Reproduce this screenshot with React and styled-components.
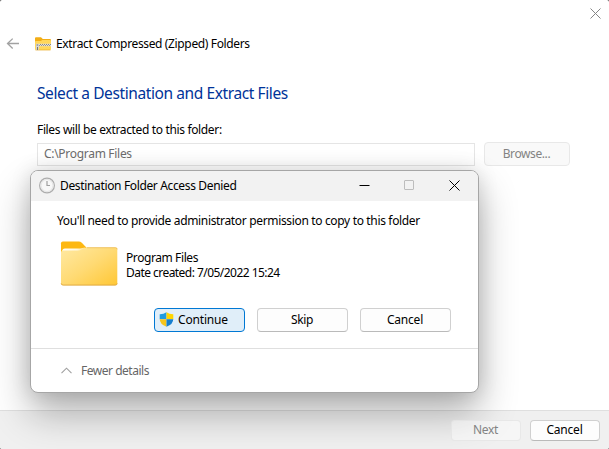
import React from 'react';
import styled, { createGlobalStyle } from 'styled-components';

const GlobalStyle = createGlobalStyle`
  * { box-sizing: border-box; }
  body {
    margin: 0;
    background: #444;
    color: #000;
    font: 12px/16px "Noto Sans", "Open Sans", sans-serif;
    overflow: hidden;
  }
`;

const Text = styled.span`
  display: block;
  white-space: nowrap;
  letter-spacing: ${(p) => p.$track ?? -0.33}px;
  color: ${(p) => p.$color ?? 'inherit'};
`;

const Wizard = styled.main`
  position: relative;
  width: 609px;
  height: 449px;
  display: flex;
  flex-direction: column;
  background: #fff;
  border-radius: 2px;
  overflow: hidden;
`;

const CaptionBar = styled.div`
  height: 32px;
  display: flex;
  justify-content: flex-end;
  padding: 8px 8px 0 0;
`;

const WizardHeader = styled.header`
  height: 24px;
  display: flex;
  align-items: center;
  padding-left: 6px;
`;

const HeaderFolder = styled.svg`
  margin: 0 5px 0 15px;
`;

const WizardBody = styled.section`
  flex: 1;
  padding: 26px 39px 0 37px;
`;

const Heading = styled.h1`
  margin: 0;
  font-size: 15.5px;
  line-height: 23px;
  font-weight: 400;
  letter-spacing: -0.4px;
  color: #003399;
  white-space: nowrap;
`;

const FieldLabel = styled.div`
  margin-top: 17px;
`;

const FieldRow = styled.div`
  display: flex;
  align-items: center;
  gap: 9px;
  margin-top: 4px;
`;

const PathField = styled.div`
  width: 438px;
  height: 23px;
  border: 1px solid #e5e5e5;
  padding: 2px 5px 2px 6px;
`;

const variants = {
  normal: 'background: #fdfdfd; border-color: #d0d0d0; border-bottom-color: #bababa; color: #000;',
  primary: 'background: #e0eef9; border-color: #0078d4; color: #000;',
  disabled: 'background: #f9f9f9; border-color: #e8e8e8; color: #838383;',
  faded: 'background: rgba(255,255,255,0.4); border-color: rgba(225,225,225,0.7); color: #838383;',
};

const Button = styled.button`
  display: flex;
  align-items: center;
  justify-content: center;
  gap: 4px;
  width: ${(p) => p.$width}px;
  height: ${(p) => p.$height ?? 24}px;
  padding: 0 1px 1px 0;
  border: 1px solid;
  border-radius: 4px;
  font: inherit;
  ${(p) => variants[p.$variant ?? 'normal']}
`;

const ElevatedButton = styled(Button)`
  justify-content: flex-start;
  padding-left: 4px;
`;

const WizardFooter = styled.footer`
  height: 39px;
  display: flex;
  justify-content: flex-end;
  gap: 9px;
  padding: 9px 9px 0 0;
  background: #f0f0f0;
  border-top: 1px solid #dfdfdf;
`;

const FooterAction = styled.div`
  position: relative;
  z-index: 2;
`;

const Dialog = styled.div`
  position: absolute;
  z-index: 1;
  left: 30px;
  top: 170px;
  width: 449px;
  height: 223px;
  display: flex;
  flex-direction: column;
  border: 1px solid #a6a6a6;
  border-radius: 8px;
  background: #fff;
  overflow: hidden;
  box-shadow: 0 20px 38px rgba(0, 0, 0, 0.3), 0 0 20px rgba(0, 0, 0, 0.13);
`;

const TitleBar = styled.div`
  flex: none;
  height: 30px;
  display: flex;
  align-items: center;
  padding: 0 18px 1px 8px;
  background: #f2f2f2;
`;

const TitleText = styled.div`
  flex: 1;
  margin-left: 5px;
  padding-top: 1px;
`;

const WindowControls = styled.div`
  display: flex;
  gap: 34px;
`;

const DialogBody = styled.div`
  flex: 1;
  padding: 12px 27px 0 26px;
`;

const ItemRow = styled.div`
  display: flex;
  align-items: center;
  gap: 7px;
  margin: 9px 0 0 1px;
  line-height: 15px;
`;

const ItemInfo = styled.div`
  padding-top: 4px;
`;

const ButtonRow = styled.div`
  display: flex;
  justify-content: flex-end;
  gap: 12px;
  margin-top: 20px;
`;

const Details = styled.div`
  flex: none;
  height: 44px;
  display: flex;
  align-items: center;
  gap: 8px;
  padding-left: 30px;
  border-top: 1px solid #dfdfdf;
`;

const CloseIcon = ({ color, width = 1 }) => (
  <svg width="11" height="11" viewBox="0 0 11 11" fill="none" stroke={color} strokeWidth={width}>
    <path d="M.5.5l10 10M10.5.5l-10 10" />
  </svg>
);

const BackIcon = () => (
  <svg width="14" height="12" viewBox="0 0 14 12" fill="none" stroke="#a2a2a2" strokeWidth="1.3">
    <path d="M13 5.5H1.5M6.7.6L1.5 5.5l5.2 5" />
  </svg>
);

const ZippedFolder = () => (
  <HeaderFolder width="16" height="14" viewBox="0 0 16 14">
    <path d="M0 1.3Q0 .3 1 .3h5l1.8 1.8H15q1 0 1 1V6H0z" fill="#f2ad16" />
    <path d="M0 5q0-1 1-1h4.8l1.5-1H15q1 0 1 1v8q0 1-1 1H1q-1 0-1-1z" fill="#ffd75b" />
    <path d="M.5 13h15" stroke="#e9ac27" strokeWidth=".7" />
    <path d="M1 8h15" stroke="#e2e0da" strokeWidth="2.4" />
    <path d="M1 7.5h15" stroke="#8a8a86" strokeWidth="1" strokeDasharray="1 1" />
    <path d="M2 8.5h14" stroke="#9a9a94" strokeWidth="1" strokeDasharray="1 1" />
    <path d="M1 7h3v3.3l-.5 3h-2L1 10.3z" fill="#d6d6d6" />
    <path d="M1.6 8h1.6M2.5 10v3" stroke="#777" />
  </HeaderFolder>
);

const Folder = () => (
  <svg width="61" height="50" viewBox="0 0 61 50">
    <defs>
      <linearGradient id="folderFront" x1="0" y1="0" x2="1" y2="1">
        <stop offset="0" stopColor="#ffe9a3" />
        <stop offset=".5" stopColor="#ffda73" />
        <stop offset="1" stopColor="#ffc734" />
      </linearGradient>
      <linearGradient id="folderGlow" x1="0" y1="0" x2="1" y2="0">
        <stop offset="0" stopColor="#fff" />
        <stop offset=".65" stopColor="#fff8e2" />
        <stop offset="1" stopColor="#ffdf87" />
      </linearGradient>
    </defs>
    <path d="M3 5.2q0-1.7 1.8-1.7h16q1.6 0 3 1.3l5 5.2L22 19H3z" fill="#fdb813" />
    <path d="M4 14q0-3.5 3-3.5h15l5-1V13H4z" fill="url(#folderGlow)" />
    <path d="M3 14.5q0-2 2-2h15q2 0 4-1.2l2-1.1q1-.7 2.5-.7h29q1.8 0 1.8 1.8v34q0 2-2 2H5q-2 0-2-2z" fill="url(#folderFront)" />
    <path d="M3.2 45.3q0 1.8 2 1.8h52q2 0 2-1.8" fill="none" stroke="#dca63f" strokeWidth=".9" />
    <path d="M29 9.7h28.5q1.7 0 1.7 1.6" fill="none" stroke="#e9b548" strokeWidth=".7" />
  </svg>
);

const Clock = () => (
  <svg width="16" height="17" viewBox="0 0 16 17" fill="none">
    <circle cx="8" cy="8.5" r="7.4" fill="#f8f8f8" stroke="#adadad" strokeWidth="1.2" />
    <circle cx="8" cy="8.5" r="6" stroke="#dedede" strokeWidth=".8" />
    <path d="M8 4v4.5h3" stroke="#a0a0a0" strokeWidth="1.2" />
  </svg>
);

const Shield = () => (
  <svg width="15" height="15" viewBox="0 0 15 15">
    <clipPath id="shieldShape">
      <path d="M7.5.3Q4.5 2.3.7 2.2V7q0 5.2 6.8 7.8 6.8-2.6 6.8-7.8V2.2Q10.5 2.3 7.5.3z" />
    </clipPath>
    <g clipPath="url(#shieldShape)">
      <path d="M0 0h7.5v7.2H0z" fill="#1d9be0" />
      <path d="M7.5 0H15v7.2H7.5z" fill="#ffd500" />
      <path d="M0 7.2h7.5V15H0z" fill="#f7c51c" />
      <path d="M7.5 7.2H15V15H7.5z" fill="#167fd0" />
    </g>
  </svg>
);

const MinimizeIcon = () => (
  <svg width="11" height="11" viewBox="0 0 11 11"><path d="M.5 5.5h10" stroke="#000" /></svg>
);

const MaximizeIcon = () => (
  <svg width="11" height="11" viewBox="0 0 11 11">
    <rect x=".5" y=".5" width="9" height="9" rx=".5" fill="none" stroke="#bdbdbd" />
  </svg>
);

const ChevronUp = () => (
  <svg width="12" height="8" viewBox="0 0 12 8" fill="none" stroke="#a0a0a0" strokeWidth="1.1">
    <path d="M.5 6.2l5-5 5 5" />
  </svg>
);

export default function App() {
  return (
    <>
      <GlobalStyle />
      <Wizard>
        <CaptionBar><CloseIcon color="#858585" /></CaptionBar>
        <WizardHeader>
          <BackIcon />
          <ZippedFolder />
          <Text $track={-0.36}>Extract Compressed (Zipped) Folders</Text>
        </WizardHeader>
        <WizardBody>
          <Heading>Select a Destination and Extract Files</Heading>
          <FieldLabel><Text $track={-0.35}>Files will be extracted to this folder:</Text></FieldLabel>
          <FieldRow>
            <PathField><Text $track={-0.3} $color="#6d6d6d">C:\Program Files</Text></PathField>
            <Button $width={86} $variant="disabled" disabled><Text $track={-0.4}>Browse...</Text></Button>
          </FieldRow>
        </WizardBody>
        <WizardFooter>
          <FooterAction><Button $width={70} $height={21} $variant="faded" disabled><Text>Next</Text></Button></FooterAction>
          <FooterAction><Button $width={70} $height={21}><Text $track={-0.2}>Cancel</Text></Button></FooterAction>
        </WizardFooter>
        <Dialog role="dialog">
          <TitleBar>
            <Clock />
            <TitleText><Text $track={-0.35}>Destination Folder Access Denied</Text></TitleText>
            <WindowControls><MinimizeIcon /><MaximizeIcon /><CloseIcon color="#000" /></WindowControls>
          </TitleBar>
          <DialogBody>
            <Text $track={-0.34}>You'll need to provide administrator permission to copy to this folder</Text>
            <ItemRow>
              <Folder />
              <ItemInfo>
                <Text $track={-0.41}>Program Files</Text>
                <Text $track={-0.54}>Date created: 7/05/2022 15:24</Text>
              </ItemInfo>
            </ItemRow>
            <ButtonRow>
              <ElevatedButton $width={91} $variant="primary"><Shield /><Text $track={-0.17}>Continue</Text></ElevatedButton>
              <Button $width={91}><Text>Skip</Text></Button>
              <Button $width={91}><Text $track={-0.2}>Cancel</Text></Button>
            </ButtonRow>
          </DialogBody>
          <Details><ChevronUp /><Text $track={-0.48} $color="#666">Fewer details</Text></Details>
        </Dialog>
      </Wizard>
    </>
  );
}
